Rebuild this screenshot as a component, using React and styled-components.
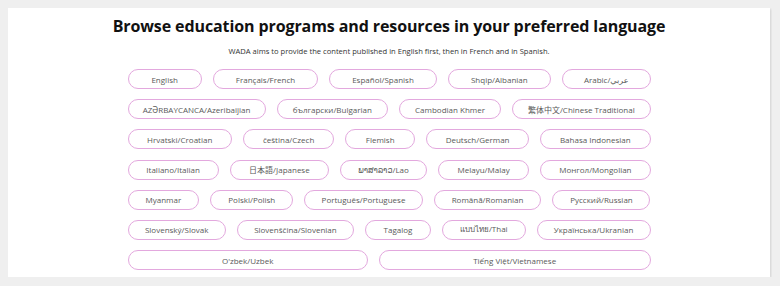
import React from "react";
import styled, { createGlobalStyle } from "styled-components";

const Global = createGlobalStyle`
  body {
    margin: 8px;
    background: #efefef;
    font-family: "Open Sans", "Noto Sans", "Noto Sans CJK JP", "DejaVu Sans", sans-serif;
  }
`;

const Card = styled.section`
  width: 762px;
  height: 269px;
  box-sizing: border-box;
  background: #fff;
  box-shadow: 1px 1px 2px rgba(0, 0, 0, 0.12);
  padding-top: 7px;
  display: flex;
  flex-direction: column;
  align-items: center;
`;

const Title = styled.h1`
  margin: 0;
  font-size: 16px;
  line-height: 22px;
  letter-spacing: -0.1px;
  font-weight: 700;
  color: #111;
  white-space: nowrap;
`;

const Subtitle = styled.p`
  margin: 8px 0 0;
  font-size: 7.6px;
  line-height: 12px;
  color: #333;
  white-space: nowrap;
`;

const Grid = styled.div`
  margin-top: 12px;
  width: 523px;
  display: flex;
  flex-direction: column;
  gap: 10.2px;
`;

const Row = styled.div`
  display: flex;
  gap: 11px;
`;

const Pill = styled.button`
  flex: 1 1 ${(p) => p.$w}px;
  height: 20px;
  box-sizing: border-box;
  padding: 0;
  border: 1.2px solid #e3a8de;
  border-radius: 10px;
  background: #fff;
  color: #595959;
  font-family: inherit;
  font-size: 8px;
  white-space: nowrap;
  display: flex;
  align-items: center;
  justify-content: center;
  cursor: pointer;
`;

const rows = [
  [
    ["English", 74],
    ["Français/French", 105],
    ["Español/Spanish", 107.4],
    ["Shqip/Albanian", 102.7],
    ["Arabic/عربي", 88.4],
  ],
  [
    ["AZƏRBAYCANCA/Azeribaijian", 137.7],
    ["български/Bulgarian", 111],
    ["Cambodian Khmer", 101.7],
    ["繁体中文/Chinese Traditional", 138],
  ],
  [
    ["Hrvatski/Croatian", 104],
    ["čeština/Czech", 91],
    ["Flemish", 69.3],
    ["Deutsch/German", 102.6],
    ["Bahasa Indonesian", 110],
  ],
  [
    ["Italiano/Italian", 91],
    ["日本語/Japanese", 99],
    ["ພາສາລາວ/Lao", 86.7],
    ["Melayu/Malay", 91],
    ["Монгол/Mongolian", 110],
  ],
  [
    ["Myanmar", 71.7],
    ["Polski/Polish", 83],
    ["Português/Portuguese", 118.3],
    ["Română/Romanian", 107.7],
    ["Русский/Russian", 98],
  ],
  [
    ["Slovenský/Slovak", 98.4],
    ["Slovenščina/Slovenian", 117.3],
    ["Tagalog", 66],
    ["แบบไทย/Thai", 83.7],
    ["Українська/Ukranian", 114],
  ],
  [
    ["O'zbek/Uzbek", 240],
    ["Tiếng Việt/Vietnamese", 271.4],
  ],
];

export default function App() {
  return (
    <>
      <Global />
      <Card>
        <Title>Browse education programs and resources in your preferred language</Title>
        <Subtitle>
          WADA aims to provide the content published in English first, then in French and in Spanish.
        </Subtitle>
        <Grid>
          {rows.map((row, i) => (
            <Row key={i}>
              {row.map(([label, w]) => (
                <Pill key={label} $w={w}>
                  {label}
                </Pill>
              ))}
            </Row>
          ))}
        </Grid>
      </Card>
    </>
  );
}
